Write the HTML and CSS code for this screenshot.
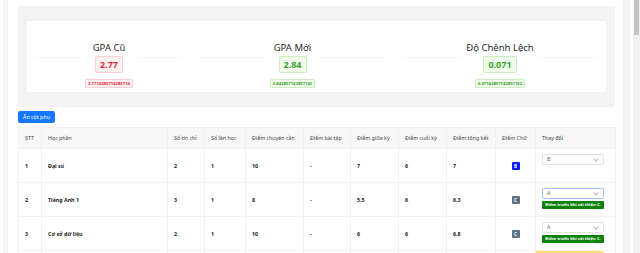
FILE: index.html
```html
<!DOCTYPE html>
<html lang="vi">
<head>
  <meta charset="UTF-8">
  <meta name="viewport" content="width=device-width, initial-scale=1.0">
  <title>Tính GPA</title>
  <link rel="stylesheet" href="styles.css">
</head>
<body>
  <div class="edge-left"></div>

  <main class="main">
    <section class="summary">
      <div class="summary-card">
        <div class="stat stat-old">
          <span class="rule"></span>
          <div class="stat-body">
            <div class="stat-title">GPA Cũ</div>
            <div class="stat-value red">2.77</div>
            <div class="stat-raw red">2.7714285714285714</div>
          </div>
          <span class="rule"></span>
        </div>
        <div class="stat stat-new">
          <span class="rule"></span>
          <div class="stat-body">
            <div class="stat-title">GPA Mới</div>
            <div class="stat-value green">2.84</div>
            <div class="stat-raw green">2.842857142857143</div>
          </div>
          <span class="rule"></span>
        </div>
        <div class="stat stat-diff">
          <span class="rule"></span>
          <div class="stat-body">
            <div class="stat-title">Độ Chênh Lệch</div>
            <div class="stat-value green">0.071</div>
            <div class="stat-raw green">0.07142857142857162</div>
          </div>
          <span class="rule"></span>
        </div>
      </div>
    </section>

    <button class="toggle-btn">Ẩn cột phụ</button>

    <table class="grades">
      <colgroup>
        <col style="width: 23px">
        <col style="width: 126px">
        <col style="width: 37px">
        <col style="width: 41px">
        <col style="width: 58px">
        <col style="width: 47px">
        <col style="width: 48px">
        <col style="width: 48px">
        <col style="width: 49px">
        <col style="width: 40px">
        <col style="width: 80px">
      </colgroup>
      <thead>
        <tr>
          <th>STT</th>
          <th>Học phần</th>
          <th>Số tín chỉ</th>
          <th>Số lần học</th>
          <th>Điểm chuyên cần</th>
          <th>Điểm bài tập</th>
          <th>Điểm giữa kỳ</th>
          <th>Điểm cuối kỳ</th>
          <th>Điểm tổng kết</th>
          <th>Điểm Chữ</th>
          <th>Thay đổi</th>
        </tr>
      </thead>
      <tbody>
        <tr>
          <td>1</td>
          <td>Đại số</td>
          <td>2</td>
          <td>1</td>
          <td>10</td>
          <td>-</td>
          <td>7</td>
          <td>6</td>
          <td>7</td>
          <td class="letter"><span class="grade grade-b">B</span></td>
          <td class="change">
            <div class="change-box">
              <div class="pick">B</div>
            </div>
          </td>
        </tr>
        <tr>
          <td>2</td>
          <td>Tiếng Anh 1</td>
          <td>3</td>
          <td>1</td>
          <td>8</td>
          <td>-</td>
          <td>5.5</td>
          <td>6</td>
          <td>6.3</td>
          <td class="letter"><span class="grade grade-c">C</span></td>
          <td class="change">
            <div class="change-box">
              <div class="pick focused">A</div>
              <div class="note">Điểm trước khi cải thiện C.</div>
            </div>
          </td>
        </tr>
        <tr>
          <td>3</td>
          <td>Cơ sở dữ liệu</td>
          <td>2</td>
          <td>1</td>
          <td>10</td>
          <td>-</td>
          <td>6</td>
          <td>6</td>
          <td>6.8</td>
          <td class="letter"><span class="grade grade-c">C</span></td>
          <td class="change">
            <div class="change-box">
              <div class="pick">A</div>
              <div class="note">Điểm trước khi cải thiện C.</div>
            </div>
          </td>
        </tr>
        <!-- next row only peeks in at the bottom edge -->
        <tr>
          <td></td>
          <td></td>
          <td></td>
          <td></td>
          <td></td>
          <td></td>
          <td></td>
          <td></td>
          <td></td>
          <td></td>
          <td class="change">
            <div class="warn"></div>
          </td>
        </tr>
      </tbody>
    </table>
  </main>

  <div class="edge-right"></div>
  <div class="scrollbar"><div class="thumb"></div></div>
</body>
</html>
```

FILE: styles.css
```css
html, body {
  height: 253px;
  overflow: hidden;
}

body {
  font-family: "Noto Sans", "Open Sans", Arial, sans-serif;
  margin: 0;
  display: flex;
  background: #fff;
  color: #222;
}

.edge-left {
  width: 5px;
  margin-left: 3px;
  background: #f3f3f3;
  flex: none;
}

.main {
  flex: 1;
  min-width: 0;
  padding: 6px 8px 0 10px;
}

.edge-right {
  width: 7px;
  margin-right: 3px;
  background: #f3f3f3;
  flex: none;
}

.scrollbar {
  width: 7px;
  background: #f1f1f1;
  flex: none;
  position: relative;
}

.scrollbar .thumb {
  position: absolute;
  left: 1px;
  right: 1px;
  top: 0;
  height: 35px;
  background: #c4c4c4;
}

/* summary */
.summary {
  background: #f3f3f3;
  padding: 15px 9px;
}

.summary-card {
  background: #fff;
  height: 71px;
  box-sizing: border-box;
  padding: 20px 9px 0;
  display: flex;
  gap: 18px;
}

.stat {
  display: flex;
  align-items: flex-start;
  gap: 4px;
}

.stat-old { width: 146px; }
.stat-new { width: 185px; }
.stat-diff { width: 194px; }

.rule {
  flex: 1;
  height: 1px;
  margin-top: 16px;
  background: #f6f6f6;
}

.stat-body {
  display: flex;
  flex-direction: column;
  align-items: center;
}

.stat-title {
  font-size: 9.5px;
  line-height: 13px;
  color: #2b2b2b;
  white-space: nowrap;
}

.stat-value {
  margin-top: 2px;
  padding: 0 4px;
  height: 15px;
  line-height: 15px;
  font-size: 9px;
  font-weight: bold;
  border-radius: 2px;
}

.stat-raw {
  margin-top: 6px;
  padding: 0 2px;
  height: 7px;
  line-height: 7px;
  font-size: 4.2px;
  font-weight: bold;
  border-radius: 1px;
  white-space: nowrap;
}

.red {
  color: #e02a3a;
  background: #fff1f2;
  border: 1px solid #fbcfd3;
}

.green {
  color: #3aa32f;
  background: #f1fbec;
  border: 1px solid #cdeec3;
}

/* button */
.toggle-btn {
  display: block;
  margin-top: 4px;
  height: 12px;
  width: 37px;
  padding: 0;
  border: none;
  border-radius: 2px;
  background: #1677ff;
  color: #fff;
  font-family: inherit;
  font-size: 5.3px;
}

/* table */
.grades {
  margin-top: 4px;
  width: 597px;
  table-layout: fixed;
  border-collapse: collapse;
  font-size: 5.3px;
}

.grades th,
.grades td {
  text-align: left;
  padding: 0 6px;
  border: 1px solid #f2f2f2;
  white-space: nowrap;
  overflow: hidden;
}

.grades th {
  height: 20px;
  background: #f8f8f8;
  font-weight: normal;
  color: #444;
}

.grades td {
  height: 33px;
  font-weight: bold;
  color: #222;
}

.grades td.letter {
  text-align: center;
}

.grade {
  display: inline-block;
  width: 8px;
  height: 8px;
  line-height: 8px;
  border-radius: 1px;
  color: #fff;
  font-size: 4.5px;
  text-align: center;
}

.grade-b { background: #0d1bff; }
.grade-c { background: #5b7186; }

.grades td.change {
  vertical-align: top;
}

.change-box {
  padding-top: 5px;
}

.pick {
  position: relative;
  height: 11px;
  box-sizing: border-box;
  border: 1px solid #e2e2e2;
  border-radius: 2px;
  padding-left: 4px;
  line-height: 9px;
  font-weight: normal;
  color: #666;
  width: 62px;
}

.pick::after {
  content: "";
  position: absolute;
  right: 5px;
  top: 2px;
  width: 3px;
  height: 3px;
  border-right: 1px solid #bbb;
  border-bottom: 1px solid #bbb;
  transform: rotate(45deg);
}

.pick.focused {
  border-color: #9cc4fb;
}

.note {
  margin-top: 2px;
  width: 62px;
  height: 8px;
  line-height: 8px;
  background: #0a820a;
  color: #fff;
  font-size: 4.2px;
  font-weight: bold;
  text-align: center;
  border-radius: 1px;
}

.warn {
  margin-left: -10px;
  width: 72px;
  height: 10px;
  background: #ffdf6b;
  border-radius: 2px;
}
```
